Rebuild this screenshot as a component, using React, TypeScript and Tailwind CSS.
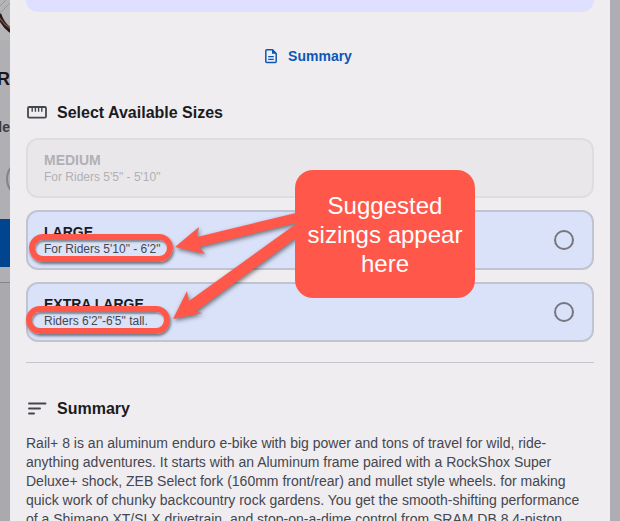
import type { ReactNode } from 'react';

type SizeOption = {
  id: string;
  name: string;
  riders: string;
  available: boolean;
};

const sizes: SizeOption[] = [
  { id: 'medium', name: 'MEDIUM', riders: `For Riders 5'5" - 5'10"`, available: false },
  { id: 'large', name: 'LARGE', riders: `For Riders 5'10" - 6'2"`, available: true },
  { id: 'extra-large', name: 'EXTRA LARGE', riders: `Riders 6'2"-6'5" tall.`, available: true },
];

const DocumentIcon = () => (
  <svg width="14" height="16" viewBox="0 0 14 16" fill="none" stroke="currentColor" strokeWidth="1.5" aria-hidden="true">
    <path d="M2.8 1.8h5.7l3.7 3.7v7.9c0 .6-.4 1-1 1H2.8c-.6 0-1-.4-1-1V2.8c0-.6.4-1 1-1z" />
    <path d="M8 1.5v4.3h4.5z" fill="currentColor" stroke="none" />
    <path d="M4.2 8.7h5.6M4.2 11.4h5.6" strokeWidth="1.2" />
  </svg>
);

const RulerIcon = () => (
  <svg width="22" height="16" viewBox="0 0 22 16" fill="none" stroke="currentColor" aria-hidden="true">
    <rect x="2" y="2" width="18" height="10.6" rx="1.2" strokeWidth="1.8" />
    <path d="M6.2 2v4.8M9.4 2v4.8M12.6 2v4.8M15.8 2v4.8" strokeWidth="1.4" />
  </svg>
);

const LinesIcon = () => (
  <svg width="22" height="16" viewBox="0 0 22 16" fill="none" stroke="currentColor" strokeWidth="1.9" strokeLinecap="round" aria-hidden="true">
    <path d="M3 2.5h16.5M3 7.5h11M3 12.5h5" />
  </svg>
);

const SectionHeading = ({ icon, children }: { icon: ReactNode; children: ReactNode }) => (
  <h2 className="flex h-6 items-center gap-[9px] text-base font-bold text-[#1b1b1f]">
    <span className="text-[#44464f]">{icon}</span>
    {children}
  </h2>
);

const SizeCard = ({ size }: { size: SizeOption }) => (
  <label
    htmlFor={size.id}
    className={
      size.available
        ? 'flex h-[60px] items-center justify-between rounded-xl border-2 border-[#c0c3d0] bg-[#d9e2f9] px-4 text-[#45464f]'
        : 'flex h-[60px] items-center justify-between rounded-xl border-2 border-[#dedde0] bg-[#e9e7ea] px-4 text-[#b1b0b4]'
    }
  >
    <span className="flex flex-col">
      <span className={size.available ? 'text-sm leading-[18px] font-bold text-[#1b1b1f]' : 'text-sm leading-[18px] font-bold'}>
        {size.name}
      </span>
      <span className="text-xs leading-4">{size.riders}</span>
    </span>
    <input
      type="radio"
      name="size"
      id={size.id}
      disabled={!size.available}
      className={
        size.available
          ? 'mr-0.5 size-5 appearance-none rounded-full border-2 border-[#777680] checked:border-[6px] checked:border-[#0b57b7]'
          : 'invisible mr-0.5 size-5 appearance-none'
      }
    />
  </label>
);

// Dimmed product card that stays visible behind the sheet
const Backdrop = () => (
  <div className="w-[10px] shrink-0 overflow-hidden bg-[#b0afb4]" aria-hidden="true">
    <svg width="10" height="40" viewBox="0 0 10 40" fill="none">
      <rect width="10" height="40" fill="#b5b5b7" />
      <path d="M0 13 10 3M0 6 6 0" stroke="#8b8b8d" strokeWidth=".7" />
      <path d="M-1 14c2 7 6 12 12 17" stroke="#1c1c1f" strokeWidth="4.5" />
      <path d="M-1 17c3 5 6 8 12 12" stroke="#8c4a38" strokeWidth="1.5" />
    </svg>
    <div className="mt-[27px] flex h-6 justify-end text-lg leading-6 font-bold text-[#17171a]">R</div>
    <div className="mt-[26px] flex h-5 justify-end text-sm leading-5 font-bold text-[#3b3b42]">le</div>
    <div className="mt-[22px] ml-[6px] size-10 rounded-full border-2 border-[#85848a]" />
    <div className="mt-5 h-12 bg-[#00458e]" />
    <div className="h-4 border-b border-[#85858a]" />
    <div className="h-60 bg-[#a9a9ae]" />
  </div>
);

// Red markers and arrows pointing at the rider heights
const Annotations = () => (
  <div className="pointer-events-none absolute inset-0">
    <div className="absolute top-[234px] left-[29px] h-7 w-36 rounded-full border-[6px] border-[#ff584a] shadow-[1px_2px_3px_rgba(0,0,0,0.5),inset_1px_2px_2px_rgba(0,0,0,0.4)]" />
    <div className="absolute top-[306px] left-[26px] h-7 w-36 rounded-full border-[6px] border-[#ff584a] shadow-[1px_2px_3px_rgba(0,0,0,0.5),inset_1px_2px_2px_rgba(0,0,0,0.4)]" />
    <svg
      className="absolute top-[200px] left-[160px] drop-shadow-[1px_2px_2px_rgba(0,0,0,0.5)]"
      width="150"
      height="140"
      viewBox="160 200 150 140"
      fill="#ff584a"
      aria-hidden="true"
    >
      <path d="M175 247 199 227 197 237 300 212V222L199 247 205 254z" />
      <path d="M173 319 187 291 189 301 300 221V235L195 312 203 313z" />
    </svg>
    <div className="absolute top-[170px] left-[295px] flex h-32 w-[180px] items-center justify-center rounded-[18px] bg-[#ff584a] text-center text-2xl leading-[29px] text-white">
      <p>
        Suggested
        <br />
        sizings appear
        <br />
        here
      </p>
    </div>
  </div>
);

const App = () => (
  <div className="relative flex h-screen overflow-hidden bg-[#adadb3] font-['Liberation_Sans',Arial,sans-serif]">
    <Backdrop />
    <main className="min-w-0 flex-1 bg-[#efedf0] px-4">
      <div className="h-3 rounded-b-xl bg-[#dfe0ff]" />
      <nav className="mt-[34px] flex justify-center">
        <a href="#summary" className="mr-1 flex h-5 items-center gap-[10px] text-sm font-bold text-[#0b57b7]">
          <DocumentIcon />
          Summary
        </a>
      </nav>
      <section className="mt-[35px]">
        <SectionHeading icon={<RulerIcon />}>Select Available Sizes</SectionHeading>
        <div className="mt-[13px] flex flex-col gap-3">
          {sizes.map((size) => (
            <SizeCard key={size.id} size={size} />
          ))}
        </div>
      </section>
      <hr className="mt-5 border-[#c4c5cc]" />
      <section id="summary" className="mt-[34px]">
        <SectionHeading icon={<LinesIcon />}>Summary</SectionHeading>
        <p className="mt-[13px] text-sm leading-[19px] text-[#45464f]">
          Rail+ 8 is an aluminum enduro e-bike with big power and tons of travel for wild, ride-
          <br />
          anything adventures. It starts with an Aluminum frame paired with a RockShox Super
          <br />
          Deluxe+ shock, ZEB Select fork (160mm front/rear) and mullet style wheels. for making
          <br />
          quick work of chunky backcountry rock gardens. You get the smooth-shifting performance
          <br />
          of a Shimano XT/SLX drivetrain, and stop-on-a-dime control from SRAM DB 8 4-piston
        </p>
      </section>
    </main>
    <div className="w-[10px] shrink-0" />
    <Annotations />
  </div>
);

export default App;
